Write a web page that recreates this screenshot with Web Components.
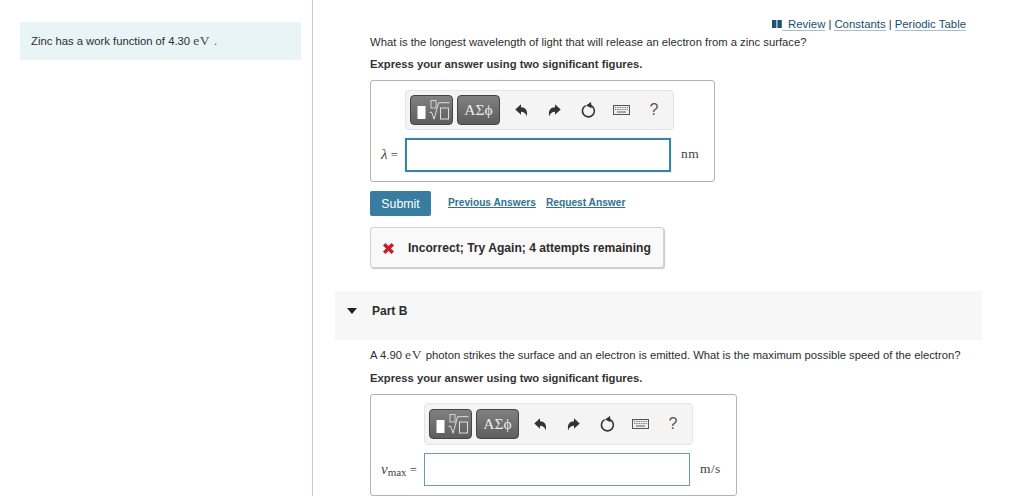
<!DOCTYPE html>
<html>
<head>
<meta charset="utf-8">
<title>Part B</title>
<style>
    html, body {
        margin: 0;
        padding: 0;
        height: 496px;
        overflow: hidden;
        background: #fff;
        font-family: "Liberation Sans", Arial, sans-serif;
        font-size: 11.28px;
        color: #2d2d2d;
    }
</style>
</head>
<body>
<mp-page>
    <intro-panel slot="side">Zinc has a work function of 4.30 <math-text>eV</math-text> .</intro-panel>

    <top-links></top-links>
    <prompt-text style="margin-top: 5px">What is the longest wavelength of light that will release an electron from a zinc surface?</prompt-text>
    <prompt-text strong style="margin-top: 8px">Express your answer using two significant figures.</prompt-text>

    <answer-box focused style="margin-top: 9px; width: 345px; --label-width: 34px; --input-width: 266px; --toolbar-height: 40px; --box-pad: 9px; --input-height: 34px">
        <span slot="label"><i style="font-size: 15px">λ</i> =</span>
        <span slot="unit">nm</span>
    </answer-box>

    <action-row></action-row>
    <feedback-box>Incorrect; Try Again; 4 attempts remaining</feedback-box>
    <part-header>Part B</part-header>

    <prompt-text style="margin-top: 8px">A 4.90 <math-text>eV</math-text> photon strikes the surface and an electron is emitted. What is the maximum possible speed of the electron?</prompt-text>
    <prompt-text strong style="margin-top: 9px">Express your answer using two significant figures.</prompt-text>

    <answer-box style="margin-top: 9px; width: 367px; --label-width: 53px; --input-width: 266px; --toolbar-height: 42px; --box-pad: 8px; --input-height: 33px">
        <span slot="label"><i style="font-size: 15px">v</i><span style="font-size: 11px; position: relative; top: 2px">max</span> =</span>
        <span slot="unit">m/s</span>
    </answer-box>
</mp-page>

<script>
/* page frame: the left intro column and the scrolling question column */
const pageTemplate = document.createElement('template');
pageTemplate.innerHTML = `
    <style>
        :host {
            display: grid;
            grid-template-columns: 313px 1fr;
            height: 496px;
        }
        .side {
            padding: 22px 11px 0 20px;
            border-right: 1px solid #bccfe2;
        }
        .main {
            padding: 16px 42px 0 57px;
        }
    </style>
    <div class="side"><slot name="side"></slot></div>
    <div class="main"><slot></slot></div>
`;

class MpPage extends HTMLElement {
    constructor() {
        super();
        this.attachShadow({ mode: 'open' }).appendChild(pageTemplate.content.cloneNode(true));
    }
}

class IntroPanel extends HTMLElement {
    constructor() {
        super();
        this.attachShadow({ mode: 'open' }).innerHTML = `
            <style>
                :host {
                    display: flex;
                    align-items: center;
                    height: 38px;
                    padding-left: 11px;
                    background: #e9f4f7;
                }
            </style>
            <div><slot></slot></div>
        `;
    }
}

class MathText extends HTMLElement {
    constructor() {
        super();
        this.attachShadow({ mode: 'open' }).innerHTML = `
            <style>
                :host {
                    display: inline;
                    font-family: "Liberation Serif", serif;
                    font-size: 13.5px;
                    letter-spacing: 0.6px;
                    color: #444;
                }
            </style>
            <slot></slot>
        `;
    }
}

class TopLinks extends HTMLElement {
    constructor() {
        super();
        this.attachShadow({ mode: 'open' }).innerHTML = `
            <style>
                :host {
                    display: flex;
                    justify-content: flex-end;
                    align-items: center;
                    height: 14px;
                    padding-top: 1px;
                    margin-bottom: -1px;
                    padding-right: 16px;
                    color: #14506f;
                    font-size: 11.4px;
                }
                a {
                    color: #14506f;
                    text-decoration: none;
                    border-bottom: 1px solid #a9c0cc;
                    line-height: 12px;
                }
                .sep { margin: 0 3px; color: #333; }
            </style>
            <svg width="10" height="8" viewBox="0 0 10 8"><path d="M0 0h4.4v8H0zM5.4 0h4.4v8H5.4z" fill="#1f5371"/></svg>
            <a href="#">&nbsp;&nbsp;Review</a><span class="sep">|</span><a href="#">Constants</a><span class="sep">|</span><a href="#">Periodic Table</a>
        `;
    }
}

class PromptText extends HTMLElement {
    constructor() {
        super();
        this.attachShadow({ mode: 'open' }).innerHTML = `
            <style>
                :host {
                    display: block;
                    line-height: 14px;
                    white-space: nowrap;
                }
                :host([strong]) {
                    font-weight: bold;
                    color: #333;
                }
            </style>
            <slot></slot>
        `;
    }
}

/* the button strip above each answer input */
const toolbarTemplate = document.createElement('template');
toolbarTemplate.innerHTML = `
    <style>
        :host {
            display: flex;
            align-items: center;
            box-sizing: border-box;
            height: var(--toolbar-height, 40px);
            width: 269px;
            padding-left: 4px;
            background: #f4f4f4;
            border: 1px solid #e4e4e4;
            border-radius: 4px;
        }
        .tpl {
            display: flex;
            align-items: center;
            justify-content: center;
            box-sizing: border-box;
            width: 43px;
            height: 30px;
            margin-right: 4px;
            border: 1px solid #444;
            border-radius: 4px;
            background: linear-gradient(#808080, #5e5e5e);
            color: #ececec;
            font-family: "Liberation Serif", serif;
            font-size: 15.5px;
        }
        .tool {
            display: flex;
            align-items: center;
            justify-content: center;
            height: 30px;
        }
        .undo { width: 33px; margin-left: 1px; }
        .redo { width: 33px; }
        .reset { width: 34px; }
        .keys { width: 33px; }
        .help { width: 32px; font-size: 16px; color: #555; font-family: "Liberation Sans", sans-serif; }
    </style>
    <div class="tpl">
        <svg width="36" height="24" viewBox="0 0 36 24">
            <rect x="3.5" y="8" width="8" height="13" fill="#fff"/>
            <rect x="17" y="2.5" width="5" height="7.5" fill="none" stroke="#dedede" stroke-width="0.9"/>
            <path d="M15.5 14.5l2 -0.5 2.6 7.2 4.4 -16.5h11" fill="none" stroke="#dedede" stroke-width="1"/>
            <rect x="26.5" y="10" width="8" height="11" fill="none" stroke="#dedede" stroke-width="1"/>
        </svg>
    </div>
    <div class="tpl">AΣϕ</div>
    <div class="tool undo">
        <svg width="13" height="13" viewBox="0 0 13 13"><path d="M0.3 5.5L6 0.3V3.3C10.2 3.3 13 6 11.8 12.6 10.8 9.2 9 7.8 6 7.8V10.8z" fill="#333"/></svg>
    </div>
    <div class="tool redo">
        <svg width="13" height="13" viewBox="0 0 13 13"><path d="M12.7 5.5L7 0.3V3.3C2.8 3.3 0 6 1.2 12.6 2.2 9.2 4 7.8 7 7.8V10.8z" fill="#333"/></svg>
    </div>
    <div class="tool reset">
        <svg width="15" height="16" viewBox="0 0 15 16">
            <path d="M4.6 3.6A6 6 0 1 0 9.8 3.4" fill="none" stroke="#333" stroke-width="1.6"/>
            <path d="M10 0L5 3.6 10.6 6.2z" fill="#333"/>
        </svg>
    </div>
    <div class="tool keys">
        <svg width="17" height="10" viewBox="0 0 17 10">
            <rect x="0.5" y="0.5" width="16" height="9" fill="#eee" stroke="#555"/>
            <path d="M2 2.5h13M2 4.5h13" stroke="#777" stroke-width="1" stroke-dasharray="1 0.7"/>
            <path d="M4 7h9" stroke="#777" stroke-width="1.2"/>
        </svg>
    </div>
    <div class="tool help">?</div>
`;

class MathToolbar extends HTMLElement {
    constructor() {
        super();
        this.attachShadow({ mode: 'open' }).appendChild(toolbarTemplate.content.cloneNode(true));
    }
}

const answerTemplate = document.createElement('template');
answerTemplate.innerHTML = `
    <style>
        :host {
            display: block;
            box-sizing: border-box;
            height: 102px;
            padding: var(--box-pad, 9px) 0 0 var(--label-width, 34px);
            border: 1px solid #b4b4b4;
            border-radius: 3px;
            font-family: "Liberation Serif", serif;
            font-size: 12.5px;
            color: #444;
        }
        .row {
            display: flex;
            align-items: center;
            margin-top: 8px;
            margin-left: calc(0px - var(--label-width, 34px));
        }
        .label {
            box-sizing: border-box;
            width: var(--label-width, 34px);
            padding-left: 10px;
            white-space: nowrap;
        }
        .input {
            box-sizing: border-box;
            flex: none;
            width: var(--input-width, 266px);
            height: var(--input-height, 34px);
            border: 1px solid #6b9cb0;
            background: #fff;
        }
        :host([focused]) .input {
            border: 2px solid #3a84a4;
            box-shadow: 0 0 1px #8fc0d4;
        }
        .unit {
            margin: -2px 0 0 10px;
            white-space: nowrap;
            font-size: 13.5px;
            letter-spacing: 0.4px;
        }
        ::slotted(span) { line-height: 14px; }
    </style>
    <math-toolbar></math-toolbar>
    <div class="row">
        <div class="label"><slot name="label"></slot></div>
        <div class="input"></div>
        <div class="unit"><slot name="unit"></slot></div>
    </div>
`;

class AnswerBox extends HTMLElement {
    constructor() {
        super();
        this.attachShadow({ mode: 'open' }).appendChild(answerTemplate.content.cloneNode(true));
    }
}

class ActionRow extends HTMLElement {
    constructor() {
        super();
        this.attachShadow({ mode: 'open' }).innerHTML = `
            <style>
                :host {
                    display: flex;
                    align-items: center;
                    margin-top: 9px;
                    height: 25px;
                }
                button {
                    width: 61px;
                    height: 25px;
                    padding: 0;
                    border: none;
                    border-radius: 2px;
                    background: #387c9f;
                    color: #fff;
                    font: 12.3px "Liberation Sans", sans-serif;
                }
                a {
                    color: #2e7294;
                    font-size: 10.2px;
                    font-weight: bold;
                    margin-top: -2px;
                    line-height: 11px;
                    text-decoration: underline;
                }
                .first { margin-left: 17px; }
                .second { margin-left: 10px; }
            </style>
            <button>Submit</button>
            <a class="first" href="#">Previous Answers</a>
            <a class="second" href="#">Request Answer</a>
        `;
    }
}

class FeedbackBox extends HTMLElement {
    constructor() {
        super();
        this.attachShadow({ mode: 'open' }).innerHTML = `
            <style>
                :host {
                    display: flex;
                    align-items: center;
                    box-sizing: border-box;
                    width: 294px;
                    height: 41px;
                    margin-top: 11px;
                    padding: 1px 0 0 12px;
                    background: #f9f9f9;
                    border: 1px solid #d2d2d2;
                    border-radius: 3px;
                    box-shadow: 1px 1px 1px #c8c8c8;
                    font-weight: bold;
                    font-size: 12.1px;
                    color: #2b2b2b;
                }
                svg { margin-right: 14px; }
            </style>
            <svg width="11" height="11" viewBox="0 0 11 11"><path d="M2.4 0L5.5 3.1 8.6 0 11 2.4 7.9 5.5 11 8.6 8.6 11 5.5 7.9 2.4 11 0 8.6 3.1 5.5 0 2.4z" fill="#c8202a"/></svg>
            <slot></slot>
        `;
    }
}

class PartHeader extends HTMLElement {
    constructor() {
        super();
        this.attachShadow({ mode: 'open' }).innerHTML = `
            <style>
                :host {
                    display: flex;
                    align-items: center;
                    box-sizing: border-box;
                    height: 49px;
                    padding-bottom: 9px;
                    margin: 23px 0 0 -35px;
                    background: #f7f7f7;
                    font-weight: bold;
                    font-size: 12px;
                    color: #2b2b2b;
                }
                .arrow {
                    width: 0;
                    height: 0;
                    margin: 0 15px 0 12px;
                    border-left: 5px solid transparent;
                    border-right: 5px solid transparent;
                    border-top: 6px solid #222;
                }
            </style>
            <span class="arrow"></span>
            <slot></slot>
        `;
    }
}

customElements.define('mp-page', MpPage);
customElements.define('intro-panel', IntroPanel);
customElements.define('math-text', MathText);
customElements.define('top-links', TopLinks);
customElements.define('prompt-text', PromptText);
customElements.define('math-toolbar', MathToolbar);
customElements.define('answer-box', AnswerBox);
customElements.define('action-row', ActionRow);
customElements.define('feedback-box', FeedbackBox);
customElements.define('part-header', PartHeader);
</script>
</body>
</html>
